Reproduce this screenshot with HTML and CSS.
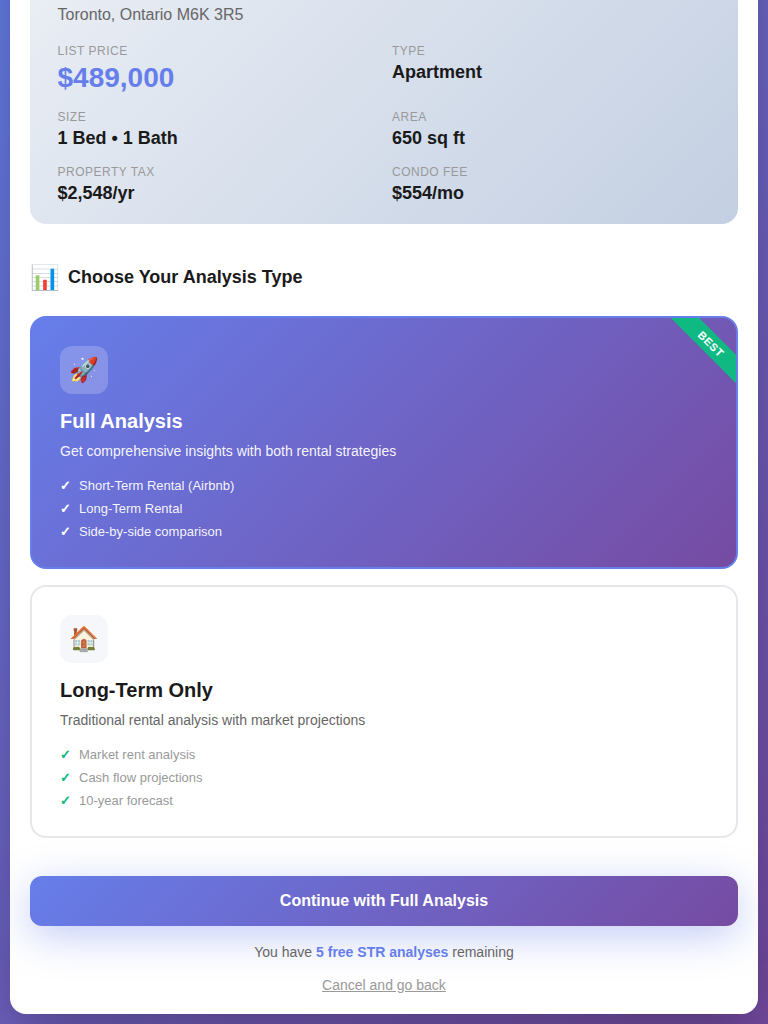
FILE: index.html
```html
<!DOCTYPE html>
<html lang="en">
<head>
<meta charset="utf-8">
<title>Choose Your Analysis Type</title>
<link rel="stylesheet" href="styles.css">
</head>
<body>
<main class="modal">
  <section class="property">
    <p class="address">Toronto, Ontario M6K 3R5</p>
    <div class="details">
      <div class="detail"><span class="label">List Price</span><span class="value price">$489,000</span></div>
      <div class="detail"><span class="label">Type</span><span class="value">Apartment</span></div>
      <div class="detail"><span class="label">Size</span><span class="value">1 Bed • 1 Bath</span></div>
      <div class="detail"><span class="label">Area</span><span class="value">650 sq ft</span></div>
      <div class="detail"><span class="label">Property Tax</span><span class="value">$2,548/yr</span></div>
      <div class="detail"><span class="label">Condo Fee</span><span class="value">$554/mo</span></div>
    </div>
  </section>
  <h2 class="heading"><span class="heading-icon">📊</span>Choose Your Analysis Type</h2>
  <div class="options">
    <article class="option selected">
      <span class="ribbon">BEST</span>
      <div class="icon">🚀</div>
      <h3 class="title">Full Analysis</h3>
      <p class="description">Get comprehensive insights with both rental strategies</p>
      <ul class="features"><li>Short-Term Rental (Airbnb)</li><li>Long-Term Rental</li><li>Side-by-side comparison</li></ul>
    </article>
    <article class="option">
      <div class="icon">🏠</div>
      <h3 class="title">Long-Term Only</h3>
      <p class="description">Traditional rental analysis with market projections</p>
      <ul class="features"><li>Market rent analysis</li><li>Cash flow projections</li><li>10-year forecast</li></ul>
    </article>
  </div>
  <button class="continue">Continue with Full Analysis</button>
  <p class="remaining">You have <strong>5 free STR analyses</strong> remaining</p>
  <a class="cancel">Cancel and go back</a>
</main>
</body>
</html>
```

FILE: styles.css
```css
* { box-sizing: border-box; margin: 0; padding: 0; }
body {
  display: flow-root;
  height: 1024px;
  padding: 0 10px 10px;
  overflow: hidden;
  font-family: "Liberation Sans", Arial, sans-serif;
  color: #1a1a1a;
  background: linear-gradient(135deg, #667eea 0%, #764ba2 100%);
}
.modal {
  height: 1214px;
  margin-top: -200px;
  padding: 200px 20px 0;
  background: #fff;
  border-radius: 16px;
  box-shadow: 0 20px 60px rgba(0, 0, 0, .3);
}
.property {
  display: flex;
  flex-direction: column;
  justify-content: flex-end;
  height: 224px;
  padding: 0 27.5px 20px;
  border-radius: 0 0 16px 16px;
  background: linear-gradient(135deg, #f5f7fa 0%, #c3cfe2 100%) bottom / 100% 518px;
}
.address { margin-bottom: 20px; font-size: 16px; line-height: 18px; color: #666; }
.details { display: grid; grid-template-columns: 1fr 1fr; gap: 16px; }
.detail { display: flex; flex-direction: column; }
.label { margin-bottom: 4px; font-size: 12px; line-height: 14px; letter-spacing: .5px; text-transform: uppercase; color: #999; }
.value { font-size: 18px; line-height: 21px; font-weight: 700; }
.price { font-size: 28px; line-height: 32px; color: #667eea; }
.heading { display: flex; align-items: center; gap: 8px; height: 33px; margin: 37px 0 22px; font-size: 18px; }
.heading-icon { width: 30px; font-size: 24px; font-weight: 400; }
.options { display: grid; gap: 16px; }
.option { position: relative; height: 253px; padding: 28px; overflow: hidden; border: 2px solid #e5e7eb; border-radius: 16px; }
.selected { color: #fff; border-color: #667eea; background: linear-gradient(135deg, #667eea 0%, #764ba2 100%); }
.icon { display: flex; align-items: center; justify-content: center; width: 48px; height: 48px; margin-bottom: 16px; border-radius: 12px; background: #f5f7fa; font-size: 24px; }
.selected .icon { background: rgba(255, 255, 255, .2); }
.title { margin-bottom: 8px; font-size: 20px; line-height: 23px; }
.description { margin-bottom: 16px; font-size: 14px; line-height: 21px; color: #666; }
.features { list-style: none; font-size: 13px; line-height: 15px; color: #999; }
.features li { display: flex; gap: 8px; margin-bottom: 8px; }
.features li::before { content: "✓"; font-weight: 700; color: #10b981; }
.selected .description, .selected .features { color: rgba(255, 255, 255, .95); }
.selected .features li::before { color: #fff; }
.ribbon { position: absolute; top: 15.5px; right: -32.5px; width: 116px; padding: 4px 0; transform: rotate(45deg); background: #10b981; font-size: 11px; line-height: 12px; font-weight: 700; letter-spacing: .5px; text-align: center; }
.continue { display: block; width: 100%; height: 50px; margin-top: 38px; border: 0; border-radius: 12px; color: #fff; background: linear-gradient(135deg, #667eea 0%, #764ba2 100%); box-shadow: 0 10px 40px rgba(102, 126, 234, .4); font: 700 16px "Liberation Sans", Arial, sans-serif; }
.remaining { margin-top: 18px; font-size: 14px; line-height: 16px; text-align: center; color: #666; }
.remaining strong { color: #667eea; }
.cancel { display: block; margin-top: 17px; font-size: 14px; line-height: 16px; text-align: center; text-decoration: underline; color: #999; }
```
